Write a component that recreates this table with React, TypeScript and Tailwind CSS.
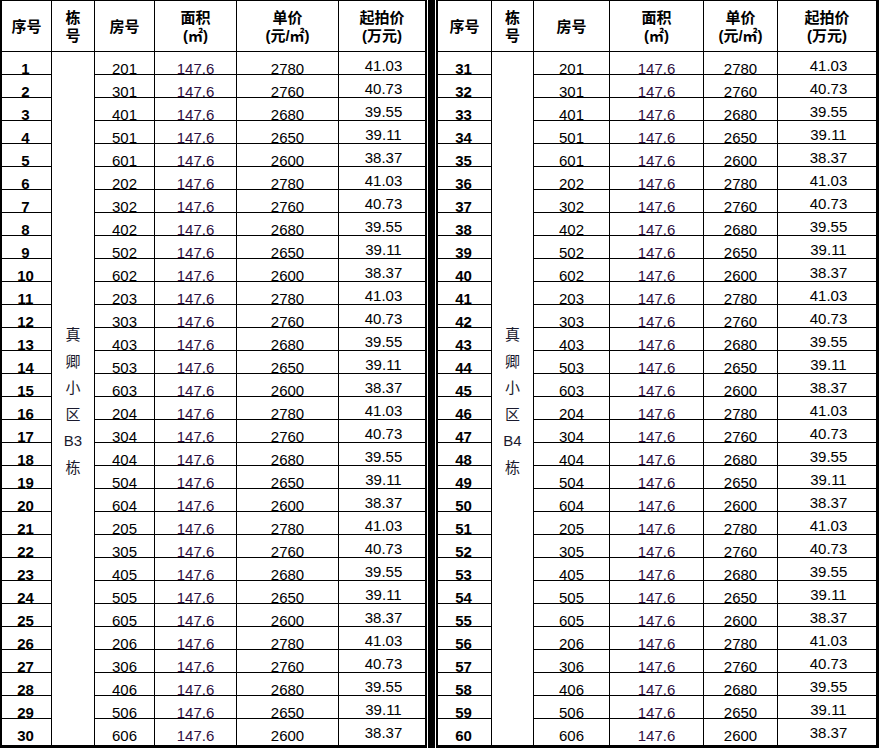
const prices = [
  { unit: "2780", total: "41.03" },
  { unit: "2760", total: "40.73" },
  { unit: "2680", total: "39.55" },
  { unit: "2650", total: "39.11" },
  { unit: "2600", total: "38.37" },
];

const floors = ["2", "3", "4", "5", "6"];

// 30 rooms per building: units 01..06, floors 2..6
function buildRows(start: number) {
  const rows = [];
  for (let i = 0; i < 30; i++) {
    const unit = Math.floor(i / 5) + 1;
    const f = i % 5;
    rows.push({
      no: String(start + i),
      room: floors[f] + "0" + unit,
      area: "147.6",
      unit: prices[f].unit,
      total: prices[f].total,
    });
  }
  return rows;
}

interface HalfProps {
  start: number;
  building: string;
  cols: string;
  borderR: string;
  width: string;
}

function Half({ start, building, cols, borderR, width }: HalfProps) {
  const rows = buildRows(start);
  const label = ["真", "卿", "小", "区", building, "栋"];

  return (
    <div
      className={`grid ${cols} grid-rows-[51px_repeat(29,23px)_26px] ${width} h-[748px] border-l-2 border-t border-b-[3px] ${borderR} border-black box-border`}
    >
      {/* header */}
      <div className="border-r border-b border-black flex items-center justify-center pt-[2px] font-bold text-[15px] leading-[18px]">
        序号
      </div>
      <div className="border-r border-b border-black flex flex-col items-center justify-center pt-[2px] font-bold text-[15px] leading-[18px]">
        <span>栋</span>
        <span>号</span>
      </div>
      <div className="border-r border-b border-black flex items-center justify-center pt-[2px] font-bold text-[15px] leading-[18px]">
        房号
      </div>
      <div className="border-r border-b border-black flex flex-col items-center justify-center pt-[2px] font-bold text-[15px] leading-[18px]">
        <span>面积</span>
        <span>(㎡)</span>
      </div>
      <div className="border-r border-b border-black flex flex-col items-center justify-center pt-[2px] font-bold text-[15px] leading-[18px]">
        <span>单价</span>
        <span>(元/㎡)</span>
      </div>
      <div className="border-b border-black flex flex-col items-center justify-center pt-[2px] font-bold text-[15px] leading-[18px]">
        <span>起拍价</span>
        <span>(万元)</span>
      </div>

      {rows.map((r, i) => {
        const last = i === rows.length - 1;
        const b = last ? "" : "border-b";
        return [
          <div
            key={"n" + i}
            className={`border-r ${b} border-black text-center font-bold text-[15px] leading-[15px] pt-[9px] pr-[2px]`}
          >
            {r.no}
          </div>,
          i === 0 ? (
            <div
              key="bld"
              className="row-span-30 border-r border-black flex flex-col items-center justify-center pt-[6px] text-[15px] text-[#1a1a2e]"
            >
              {label.map((c) => (
                <div key={c} className="h-[26.5px] leading-[26.5px]">
                  {c}
                </div>
              ))}
            </div>
          ) : null,
          <div
            key={"r" + i}
            className={`border-r ${b} border-black text-center text-[15px] leading-[15px] pt-[9px]`}
          >
            {r.room}
          </div>,
          <div
            key={"a" + i}
            className={`border-r ${b} border-black text-center text-[15px] leading-[15px] pt-[9px] text-[#2e0f42]`}
          >
            {r.area}
          </div>,
          <div
            key={"u" + i}
            className={`border-r ${b} border-black text-center text-[15px] leading-[15px] pt-[9px]`}
          >
            {r.unit}
          </div>,
          <div
            key={"t" + i}
            className={`${b} border-black text-center text-[15px] leading-[15px] pt-[6px] pl-[3px]`}
          >
            {r.total}
          </div>,
        ];
      })}
    </div>
  );
}

export default function App() {
  return (
    <div
      className="w-[879px] h-[748px] bg-white text-black flex overflow-hidden"
      style={{ fontFamily: '"Liberation Sans", "Noto Sans CJK SC", sans-serif' }}
    >
      <Half
        start={1}
        building="B3"
        cols="grid-cols-[50px_43px_60px_82px_102px_86px]"
        borderR="border-r-2"
        width="w-[427px]"
      />
      <div className="w-[1px]" />
      <div className="w-[7px] bg-black" />
      <div className="w-[1px]" />
      <Half
        start={31}
        building="B4"
        cols="grid-cols-[54px_42px_76px_94px_74px_98px]"
        borderR="border-r-[3px]"
        width="w-[443px]"
      />
    </div>
  );
}
